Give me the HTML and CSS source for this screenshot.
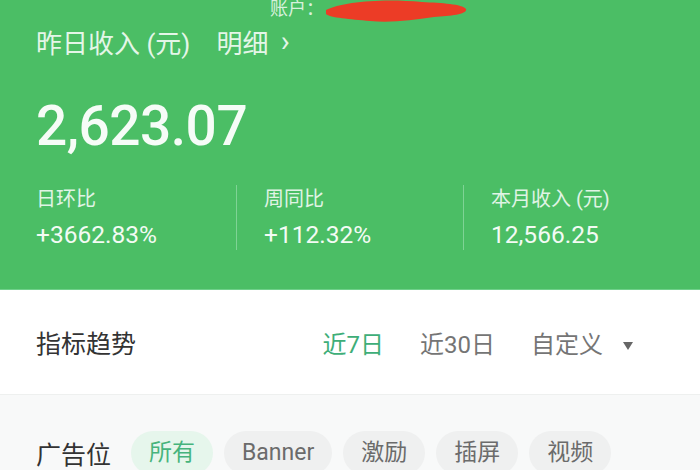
FILE: index.html
```html
<!DOCTYPE html>
<html lang="zh-CN">
<head>
  <meta charset="UTF-8" />
  <meta name="viewport" content="width=device-width, initial-scale=1.0"/>
  <title>收入概览</title>
  <link rel="stylesheet" href="styles.css">
</head>
<body>
  <div class="hero">
    <div class="account">
      <span>账户：</span>
      <svg class="scribble" width="146" height="24" viewBox="0 0 146 24">
        <path d="M4 10 C20 2 60 -2 100 2 C120 3 140 4 144 9 C146 14 130 16 112 17 C90 20 70 23 48 21 C28 19 8 18 4 14 Z" fill="#ec3c26"/>
      </svg>
    </div>

    <div class="title-row">
      <span>昨日收入 (元)</span>
      <a class="detail">明细 <span class="chev">›</span></a>
    </div>

    <div class="amount">2,623.07</div>

    <div class="stats">
      <div class="stat">
        <div class="stat-label">日环比</div>
        <div class="stat-value">+3662.83%</div>
      </div>
      <div class="stat">
        <div class="stat-label">周同比</div>
        <div class="stat-value">+112.32%</div>
      </div>
      <div class="stat">
        <div class="stat-label">本月收入 (元)</div>
        <div class="stat-value">12,566.25</div>
      </div>
    </div>
  </div>

  <!-- 指标趋势 -->
  <div class="trend">
    <h2>指标趋势</h2>
    <div class="ranges">
      <span class="range active">近7日</span>
      <span class="range">近30日</span>
      <span class="range">自定义 <span class="caret"></span></span>
    </div>
  </div>

  <!-- 广告位 -->
  <div class="slots">
    <span class="slots-label">广告位</span>
    <div class="chips">
      <span class="chip active">所有</span>
      <span class="chip">Banner</span>
      <span class="chip">激励</span>
      <span class="chip">插屏</span>
      <span class="chip">视频</span>
    </div>
  </div>
</body>
</html>
```

FILE: styles.css
```css
body {
  font-family: Roboto, "Noto Sans CJK SC", sans-serif;
  background: #f8f9f9;
  margin: 0;
  padding: 0;
  overflow: hidden;
}

.hero {
  display: flow-root;
  height: 290px;
  box-sizing: border-box;
  background: #4bbe65;
  color: #f3fbf4;
  padding: 0 36px;
  border-bottom: 1px solid #6fd08a;
}

.account {
  display: flex;
  align-items: flex-start;
  height: 24px;
  margin-top: -6px;
  padding-left: 234px;
  font-size: 18px;
  color: #d8f1dd;
}

.scribble {
  margin-top: 6px;
  margin-left: -2px;
}

.title-row {
  display: flex;
  align-items: center;
  gap: 26px;
  margin-top: 9px;
  font-size: 26px;
  line-height: 34px;
  color: #e4f6e8;
}

.detail .chev {
  font-size: 30px;
  line-height: 30px;
  margin-left: 6px;
  position: relative;
  top: -2px;
}

.amount {
  font-size: 55px;
  font-weight: 500;
  letter-spacing: -0.5px;
  line-height: 60px;
  margin-top: 35px;
  color: #f6fcf7;
}

.stats {
  display: grid;
  grid-template-columns: 200px 227px 1fr;
  margin-top: 29px;
}

.stat {
  padding: 0 27px;
  border-left: 1px solid #7fd395;
}

.stat:first-child {
  padding-left: 0;
  border-left: none;
}

.stat-label {
  font-size: 20px;
  line-height: 28px;
  color: #e0f4e5;
}

.stat-value {
  font-size: 24.5px;
  line-height: 30px;
  margin-top: 7px;
  color: #f3fbf4;
}

.trend {
  display: flex;
  align-items: center;
  justify-content: space-between;
  height: 104px;
  background: #fff;
  padding: 0 67px 0 36px;
  border-bottom: 1px solid #eef0ef;
}

.trend h2 {
  margin: 0;
  font-size: 25px;
  font-weight: 400;
  color: #333;
}

.ranges {
  display: flex;
  align-items: center;
  gap: 36px;
  font-size: 24px;
  color: #757575;
}

.range.active {
  color: #3eae78;
}

.caret {
  display: inline-block;
  width: 0;
  height: 0;
  margin-left: 14px;
  vertical-align: middle;
  border-left: 5px solid transparent;
  border-right: 5px solid transparent;
  border-top: 8px solid #666;
}

.slots {
  display: flex;
  align-items: center;
  gap: 20px;
  padding: 36px 36px 0;
}

.slots-label {
  font-size: 25px;
  color: #333;
}

.chips {
  display: flex;
  gap: 11px;
}

.chip {
  padding: 0 18px;
  line-height: 44px;
  border-radius: 22px;
  background: #eff0f0;
  font-size: 23px;
  color: #6b6b6b;
}

.chip.active {
  background: #e6f6ec;
  color: #46b47c;
}
```
